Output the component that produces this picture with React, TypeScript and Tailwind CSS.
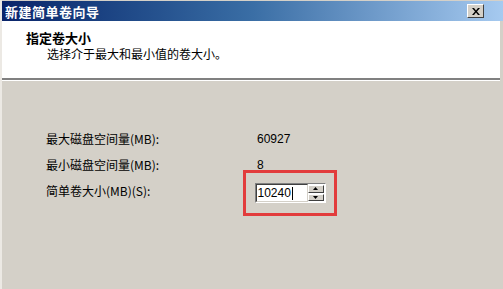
import React from 'react'

const FONT = "font-['SimSun','Noto_Sans_CJK_SC',sans-serif]"

function CloseButton() {
  return (
    <div className="flex h-[14px] w-[17px] items-center justify-center border border-t-white border-l-white border-r-[#404040] border-b-[#404040] bg-[#d4d0c8]">
      <svg width="8" height="7" viewBox="0 0 8 7">
        <path d="M0 0h2l2 2.5L6 0h2L5 3.5 8 7H6L4 4.5 2 7H0l3-3.5z" fill="#000" />
      </svg>
    </div>
  )
}

function Spinner() {
  return (
    <div className="flex w-[17px] flex-col gap-[1px] py-[1px] pr-[1px]">
      {['up', 'down'].map(dir => (
        <div
          key={dir}
          className="flex h-[8px] items-center justify-center border border-t-white border-l-white border-r-[#404040] border-b-[#404040] bg-[#d4d0c8]"
        >
          <svg width="5" height="3" viewBox="0 0 5 3">
            {dir === 'up' ? <path d="M2.5 0L5 3H0z" fill="#000" /> : <path d="M0 0h5L2.5 3z" fill="#000" />}
          </svg>
        </div>
      ))}
    </div>
  )
}

export default function App() {
  return (
    <div className={`flex h-[289px] w-[503px] flex-col overflow-hidden border-l-2 border-l-[#ece9e4] bg-[#d4d0c8] ${FONT}`}>
      {/* Title bar */}
      <div className="flex h-[21px] shrink-0 items-center justify-between border-t border-t-[#d4d0c8] bg-gradient-to-r from-[#0a246a] via-[#3a6ea5] to-[#a6caf0] pl-[3px] pr-[19px]">
        <span className="text-[13px] font-bold leading-none tracking-[0.5px] text-white">新建简单卷向导</span>
        <CloseButton />
      </div>

      {/* Header */}
      <div className="mr-[3px] flex h-[59px] shrink-0 flex-col border-b-2 border-b-[#808080] bg-white pl-[24px] pt-[9px]">
        <span className="h-[16px] text-[13px] font-bold leading-[16px] text-black">指定卷大小</span>
        <span className="h-[16px] pl-[21px] text-[12px] leading-[16px] text-black">选择介于最大和最小值的卷大小。</span>
      </div>
      <div className="mr-[3px] h-px shrink-0 bg-white" />

      {/* Body */}
      <div className="flex flex-1 flex-col pl-[44px] pt-[45px] text-[12px] text-black">
        <div className="flex h-[26px] items-center">
          <span className="w-[211px]">最大磁盘空间量(MB):</span>
          <span className="font-['Liberation_Sans',sans-serif]">60927</span>
        </div>
        <div className="flex h-[26px] items-center">
          <span className="w-[211px]">最小磁盘空间量(MB):</span>
          <span className="font-['Liberation_Sans',sans-serif]">8</span>
        </div>
        <div className="flex h-[26px] items-center">
          <span className="w-[197px]">简单卷大小(MB)(S):</span>
          <div className="mt-[4px] flex h-[46px] w-[94px] items-center justify-center border-[3px] border-[#e23c3c]">
            <div className="flex h-[20px] w-[71px] border border-t-[#808080] border-l-[#808080] border-r-white border-b-white bg-white">
              <div className="flex flex-1 items-center border border-t-[#404040] border-l-[#404040] border-r-[#d4d0c8] border-b-[#d4d0c8] pl-[1px] font-['Liberation_Sans',sans-serif] text-[12px]">
                10240<span className="ml-[1px] inline-block h-[13px] w-px bg-black" />
              </div>
              <Spinner />
            </div>
          </div>
        </div>
      </div>
    </div>
  )
}
